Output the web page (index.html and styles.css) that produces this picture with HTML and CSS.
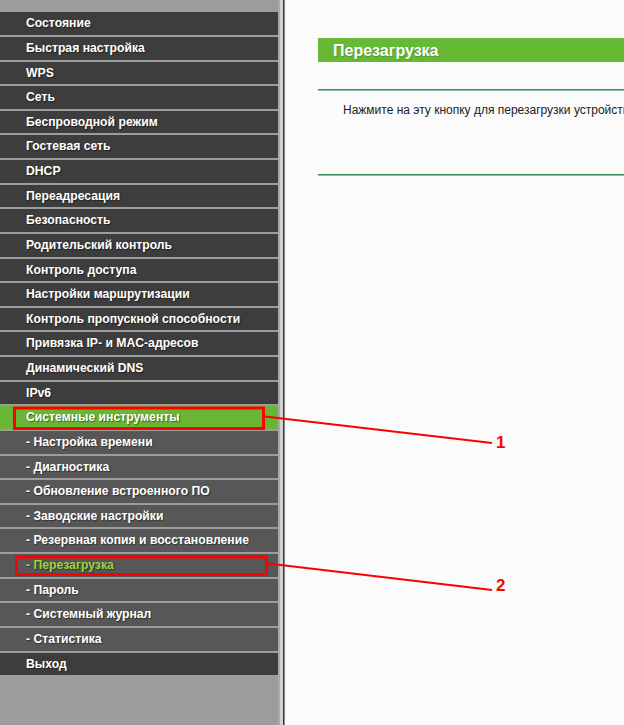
FILE: index.html
```html
<!DOCTYPE html>
<html lang="ru">
<head>
<meta charset="utf-8">
<title>Перезагрузка</title>
<link rel="stylesheet" href="styles.css">
</head>
<body>
<div class="page">
  <nav class="menu">
    <div class="item">Состояние</div>
    <div class="item">Быстрая настройка</div>
    <div class="item">WPS</div>
    <div class="item">Сеть</div>
    <div class="item">Беспроводной режим</div>
    <div class="item">Гостевая сеть</div>
    <div class="item">DHCP</div>
    <div class="item">Переадресация</div>
    <div class="item">Безопасность</div>
    <div class="item">Родительский контроль</div>
    <div class="item">Контроль доступа</div>
    <div class="item">Настройки маршрутизации</div>
    <div class="item">Контроль пропускной способности</div>
    <div class="item">Привязка IP- и MAC-адресов</div>
    <div class="item">Динамический DNS</div>
    <div class="item">IPv6</div>
    <div class="item selected">Системные инструменты</div>
    <div class="item sub">- Настройка времени</div>
    <div class="item sub">- Диагностика</div>
    <div class="item sub">- Обновление встроенного ПО</div>
    <div class="item sub">- Заводские настройки</div>
    <div class="item sub">- Резервная копия и восстановление</div>
    <div class="item sub active">- Перезагрузка</div>
    <div class="item sub">- Пароль</div>
    <div class="item sub">- Системный журнал</div>
    <div class="item sub">- Статистика</div>
    <div class="item">Выход</div>
  </nav>
  <div class="divider"></div>
  <main class="content">
    <div class="panel">
      <div class="title">Перезагрузка</div>
      <div class="rule first"></div>
      <p class="text">Нажмите на эту кнопку для перезагрузки устройства.</p>
      <div class="rule second"></div>
    </div>
  </main>
</div>
<svg class="notes" width="624" height="725" viewBox="0 0 624 725">
  <rect x="14.5" y="408" width="249" height="20.5" fill="none" stroke="#f00" stroke-width="3"/>
  <rect x="16.5" y="557" width="250" height="17.5" fill="none" stroke="#f00" stroke-width="3"/>
  <line x1="265" y1="416.5" x2="492" y2="443" stroke="#f00" stroke-width="2"/>
  <line x1="268" y1="563.5" x2="492" y2="590" stroke="#f00" stroke-width="2"/>
  <text x="496" y="448" class="num">1</text>
  <text x="496" y="591" class="num">2</text>
</svg>
</body>
</html>
```
FILE: styles.css
```css
html, body {
  margin: 0;
  padding: 0;
}
body {
  width: 624px;
  height: 725px;
  overflow: hidden;
  position: relative;
  background: #fbfbfb;
  font-family: "Liberation Sans", Arial, sans-serif;
}
.page {
  display: flex;
  height: 725px;
}
.menu {
  width: 278px;
  flex: none;
  background: #9c9c9c;
  padding-top: 12.3px;
  display: flex;
  flex-direction: column;
  gap: 2px;
  box-sizing: border-box;
}
.item {
  height: 22.63px;
  line-height: 22px;
  padding-left: 26px;
  background: #3d3d3d;
  color: #fff;
  font-size: 12.2px;
  font-weight: bold;
  white-space: nowrap;
  text-shadow: 1px 1px 1px rgba(0,0,0,0.45);
}
.item.sub {
  background: #575757;
}
.item.selected {
  background: #68b634;
}
.item.active {
  color: #9ed53c;
}
.divider {
  width: 7px;
  flex: none;
  background: linear-gradient(to right, #a9a9a9 0, #a9a9a9 2px, #d2d2d2 2px, #d2d2d2 5px, #3a3a3a 5px, #3a3a3a 6px, #8a8a8a 6px);
}
.content {
  flex: 1;
  overflow: hidden;
  background: #fbfbfb;
}
.panel {
  width: 700px;
  margin-left: 33px;
  padding-top: 37.7px;
}
.title {
  height: 24.6px;
  line-height: 25px;
  background: #67b934;
  color: #fff;
  font-size: 16px;
  font-weight: bold;
  padding-left: 15px;
  text-shadow: 1px 1px 1px rgba(0,0,0,0.2);
}
.rule {
  height: 0;
  border-top: 1px solid #3f8a5c;
  border-bottom: 1px solid #8fbea0;
}
.rule.first {
  margin-top: 26.4px;
}
.text {
  margin: 12px 0 0 25px;
  font-size: 12px;
  line-height: 14px;
  color: #222;
  white-space: nowrap;
}
.rule.second {
  margin-top: 57px;
}
.notes {
  position: absolute;
  left: 0;
  top: 0;
  pointer-events: none;
}
.num {
  fill: #f00;
  font-family: "Liberation Sans", Arial, sans-serif;
  font-weight: bold;
  font-size: 17px;
}
```
